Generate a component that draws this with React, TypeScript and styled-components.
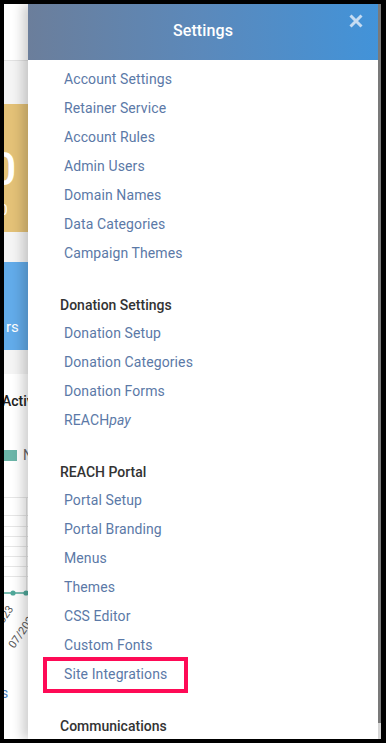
import React from "react";
import styled, { createGlobalStyle } from "styled-components";

const Global = createGlobalStyle`
  html, body { margin: 0; padding: 0; background: #000; }
  body { font-family: Roboto, "Noto Sans", Arial, sans-serif; -webkit-font-smoothing: antialiased; }
  * { box-sizing: border-box; }
`;

const Frame = styled.div`
  width: 386px;
  height: 743px;
  padding: 4px 5px 4px 4px;
  display: flex;
  overflow: hidden;
  background: #000;
`;

const Backdrop = styled.div`
  width: 24px;
  flex: none;
  display: flex;
  flex-direction: column;
  overflow: hidden;
  background: #fff;
`;

const TopBar = styled.div`
  height: 57px;
  flex: none;
  background: #fff;
  border-bottom: 1px solid #e2e2e2;
`;

const GrayArea = styled.div`
  background: #f4f4f4;
  padding-top: 43px;
  padding-bottom: 24px;
  display: flex;
  flex-direction: column;
  gap: 30px;
`;

const Card = styled.div<{ $bg: string; $h: number }>`
  height: ${(p) => p.$h}px;
  background: ${(p) => p.$bg};
  color: #fff;
  display: flex;
  flex-direction: column;
  overflow: hidden;
  white-space: nowrap;
`;

const BigNum = styled.div`
  font-size: 46px;
  font-weight: 500;
  line-height: 46px;
  margin: 42px 0 0 -40px;
`;

const SmallNum = styled.div`
  font-size: 14px;
  line-height: 16px;
  margin: 10px 0 0 -12px;
`;

const CardLabel = styled.div`
  font-size: 15px;
  line-height: 18px;
  margin: 56px 0 0 2px;
`;

const ChartArea = styled.div`
  background: #fff;
  display: flex;
  flex-direction: column;
  white-space: nowrap;
  overflow: hidden;
`;

const ChartTitle = styled.div`
  font-size: 14px;
  font-weight: 500;
  color: #222;
  line-height: 20px;
  margin: 17px 0 0 -2px;
`;

const Legend = styled.div`
  display: flex;
  align-items: center;
  gap: 6px;
  margin-top: 36px;
  font-size: 14px;
  color: #666;
`;

const Swatch = styled.span`
  width: 13px;
  height: 11px;
  background: #6bb5a8;
  flex: none;
`;

const LinkText = styled.div`
  font-size: 14px;
  color: #4a7fc0;
  margin: 8px 0 0 -3px;
`;

const Drawer = styled.div`
  width: 350px;
  flex: none;
  display: flex;
  flex-direction: column;
  background: #fff;
  box-shadow: -6px 0 10px rgba(0, 0, 0, 0.18);
  position: relative;
  z-index: 1;
`;

const Header = styled.div`
  height: 56px;
  flex: none;
  padding-bottom: 4px;
  background: linear-gradient(90deg, #6b7e9b 0%, #5b89bb 50%, #4293d9 100%);
  display: flex;
  align-items: center;
  justify-content: center;
  position: relative;
`;

const Title = styled.h1`
  margin: 0;
  font-size: 16px;
  font-weight: 500;
  color: #fff;
  letter-spacing: 0.1px;
`;

const CloseButton = styled.button`
  position: absolute;
  top: 9px;
  right: 14px;
  width: 16px;
  height: 16px;
  padding: 0;
  border: 0;
  background: none;
  display: flex;
  cursor: pointer;
`;

const List = styled.div`
  display: flex;
  flex-direction: column;
  padding-top: 4.5px;
`;

const SectionTitle = styled.div`
  height: 27px;
  margin-top: 24px;
  padding-left: 32px;
  display: flex;
  align-items: center;
  font-size: 14px;
  font-weight: 500;
  color: #333;
`;

const Item = styled.a`
  position: relative;
  height: 29px;
  padding-left: 36px;
  display: flex;
  align-items: center;
  font-size: 14px;
  color: #5b79a7;
  text-decoration: none;
  letter-spacing: 0.1px;
`;

const Highlight = styled.span`
  position: absolute;
  left: 15px;
  top: -3px;
  width: 145px;
  height: 36px;
  border: 4px solid #fe0a56;
`;

const Scrollbar = styled.div`
  width: 3px;
  flex: none;
  background: linear-gradient(180deg, #7c7c7c 0px, #7c7c7c 719px, #d9d9d9 719px, #d9d9d9 100%);
`;

const sections: { title?: string; items: React.ReactNode[] }[] = [
  {
    items: [
      "Account Settings",
      "Retainer Service",
      "Account Rules",
      "Admin Users",
      "Domain Names",
      "Data Categories",
      "Campaign Themes",
    ],
  },
  {
    title: "Donation Settings",
    items: [
      "Donation Setup",
      "Donation Categories",
      "Donation Forms",
      <>
        REACH<i>pay</i>
      </>,
    ],
  },
  {
    title: "REACH Portal",
    items: [
      "Portal Setup",
      "Portal Branding",
      "Menus",
      "Themes",
      "CSS Editor",
      "Custom Fonts",
      "Site Integrations",
    ],
  },
  { title: "Communications", items: [] },
];

const Chart = () => (
  <svg width="24" height="180" viewBox="0 0 24 180" style={{ display: "block", marginTop: 34 }}>
    {[0, 18, 29, 39, 49, 59, 69, 79].map((y) => (
      <line key={y} x1="0" y1={y + 0.5} x2="24" y2={y + 0.5} stroke="#e6e6e6" strokeWidth="1" />
    ))}
    <line x1="22.5" y1="0" x2="22.5" y2="96" stroke="#e6e6e6" />
    <line x1="0" y1="96" x2="24" y2="96" stroke="#4fa89a" strokeWidth="1.5" />
    <circle cx="9" cy="96" r="2.6" fill="#4fa89a" />
    <circle cx="22" cy="96" r="2.6" fill="#4fa89a" />
    <text x="0" y="0" fontSize="11" fill="#555" fontFamily="Roboto, sans-serif" transform="translate(-14 146) rotate(-55)">
      04/2023
    </text>
    <text x="0" y="0" fontSize="11" fill="#555" fontFamily="Roboto, sans-serif" transform="translate(10 152) rotate(-55)">
      07/2023
    </text>
  </svg>
);

export default function App() {
  return (
    <>
      <Global />
      <Frame>
        <Backdrop>
          <TopBar />
          <GrayArea>
            <Card $bg="#e3c177" $h={128}>
              <BigNum>10</BigNum>
              <SmallNum>$0</SmallNum>
            </Card>
            <Card $bg="#62abe9" $h={88}>
              <CardLabel>rs</CardLabel>
            </Card>
          </GrayArea>
          <ChartArea>
            <ChartTitle>Activity</ChartTitle>
            <Legend>
              <Swatch />N
            </Legend>
            <Chart />
            <LinkText>s</LinkText>
          </ChartArea>
        </Backdrop>
        <Drawer>
          <Header>
            <Title>Settings</Title>
            <CloseButton aria-label="Close">
              <svg width="16" height="16" viewBox="0 0 16 16">
                <path d="M2.5 2.5 L13.5 13.5 M13.5 2.5 L2.5 13.5" stroke="#c6dcf2" strokeWidth="3" strokeLinecap="butt" />
              </svg>
            </CloseButton>
          </Header>
          <List>
            {sections.map((s, si) => (
              <React.Fragment key={si}>
                {s.title && <SectionTitle>{s.title}</SectionTitle>}
                {s.items.map((it, i) => (
                  <Item key={i} href="#">
                    {it === "Site Integrations" && <Highlight />}
                    {it}
                  </Item>
                ))}
              </React.Fragment>
            ))}
          </List>
        </Drawer>
        <Scrollbar />
      </Frame>
    </>
  );
}
